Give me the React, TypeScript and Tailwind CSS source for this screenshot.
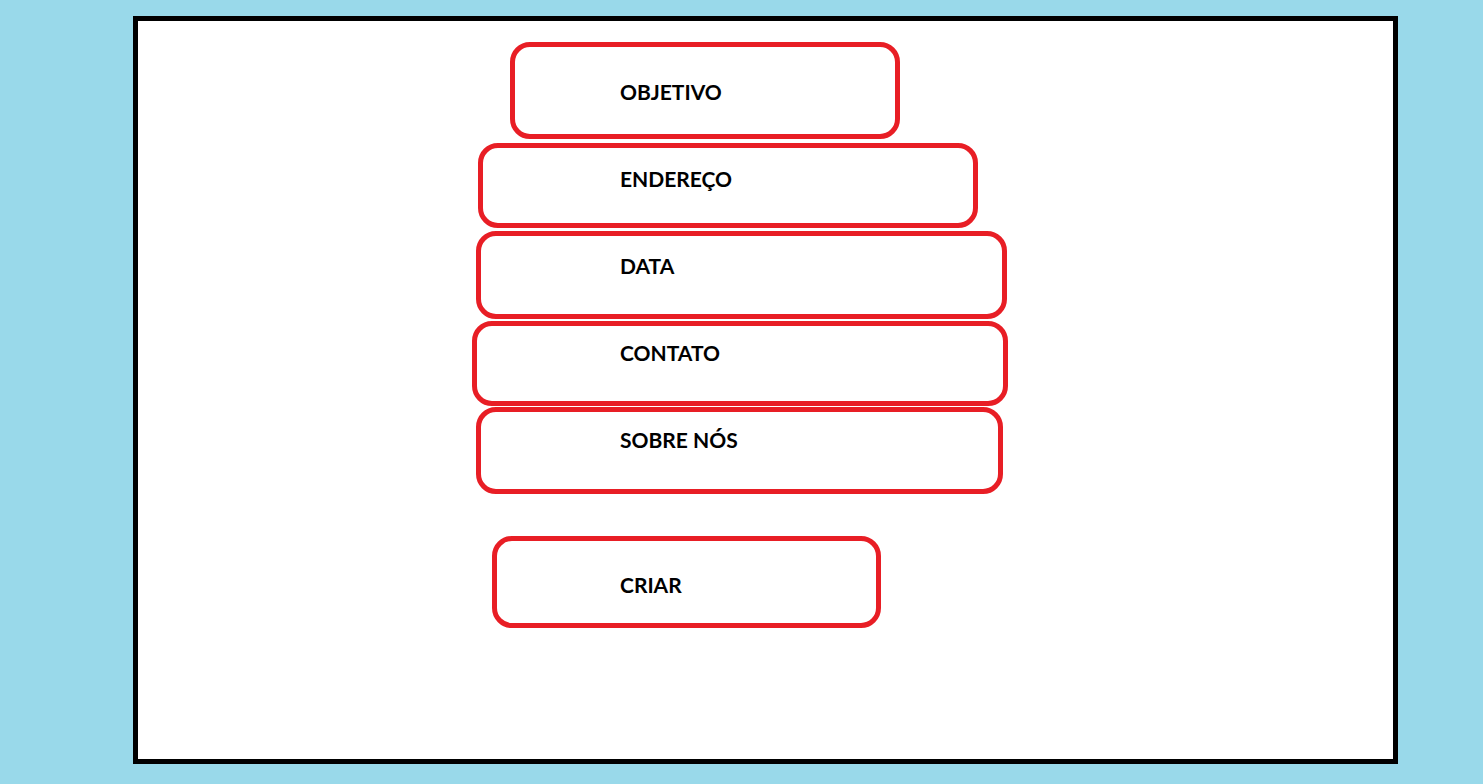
import React from "react";

type Field = {
  id: string;
  label: string;
  box: string;
};

const fields: Field[] = [
  { id: "objetivo", label: "OBJETIVO", box: "ml-[38px] mb-1 h-[97px] w-[390px] pl-[105px] pt-[31px]" },
  { id: "endereco", label: "ENDEREÇO", box: "ml-[6px] mb-[3px] h-[85px] w-[500px] pl-[137px] pt-[17px]" },
  { id: "data", label: "DATA", box: "ml-1 mb-[2px] h-[88px] w-[531px] pl-[139px] pt-4" },
  { id: "contato", label: "CONTATO", box: "mb-px h-[85px] w-[536px] pl-[143px] pt-[13px]" },
  { id: "sobre", label: "SOBRE NÓS", box: "ml-1 mb-[42px] h-[87px] w-[527px] pl-[139px] pt-[14px]" },
];

const outline = "flex max-w-full items-start rounded-[20px] border-5 border-[#e81e25] bg-white pr-4";

export default function App() {
  return (
    <div className="flex min-h-screen bg-[#99d9ea] pt-4 pr-[85px] pb-5 pl-[133px] font-['Lato','Carlito',sans-serif] text-[21px] leading-7 font-bold text-black">
      <main className="min-w-0 flex-1 border-5 border-black bg-white pt-[21px] pl-[334px]">
        <form className="flex flex-col items-start" onSubmit={(e) => e.preventDefault()}>
          {fields.map((field) => (
            <div key={field.id} className={`${outline} ${field.box}`}>
              <label htmlFor={field.id} className="shrink-0 whitespace-nowrap">
                {field.label}
              </label>
              <input
                id={field.id}
                type="text"
                className="ml-3 h-7 min-w-0 flex-1 bg-transparent outline-none"
              />
            </div>
          ))}
          <button type="submit" className={`${outline} ml-5 h-[92px] w-[389px] cursor-pointer pt-[30px] pl-[123px] text-left`}>
            CRIAR
          </button>
        </form>
      </main>
    </div>
  );
}
